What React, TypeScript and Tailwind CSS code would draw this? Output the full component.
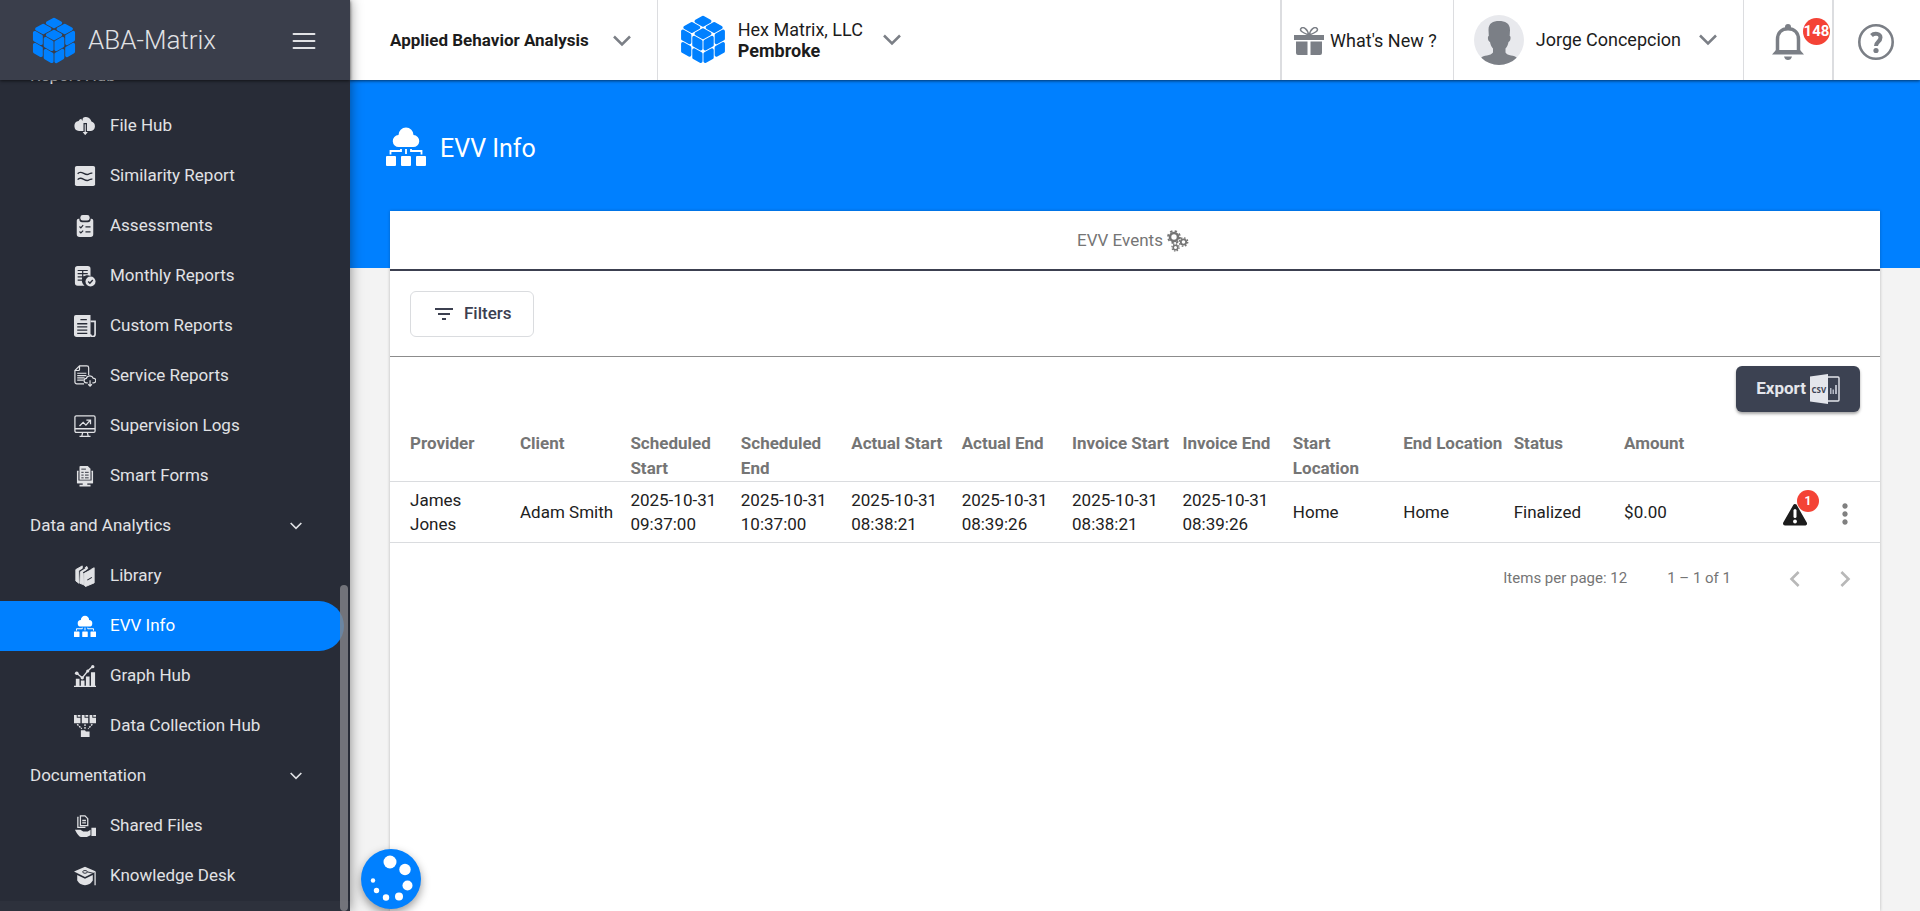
import React, { useState } from "react";
import { FiMenu } from "react-icons/fi";
import { MdChevronLeft, MdChevronRight, MdFilterList, MdMoreVert } from "react-icons/md";

interface IconProps {
  className?: string;
}

interface NavItem {
  label: string;
  icon: (props: IconProps) => React.ReactElement;
}

interface NavSection {
  title: string;
  items: NavItem[];
}

interface EvvEvent {
  provider: string;
  client: string;
  scheduledStart: string;
  scheduledEnd: string;
  actualStart: string;
  actualEnd: string;
  invoiceStart: string;
  invoiceEnd: string;
  startLocation: string;
  endLocation: string;
  status: string;
  amount: number;
  alerts: number;
}

// Isometric cube, four tiles on each of the three faces
const CUBE_FACES = [
  { o: [22, 0], u: [21.5, 12], v: [-21.5, 12] },
  { o: [0.5, 12], u: [21.5, 12], v: [0, 24] },
  { o: [22, 24], u: [21.5, -12], v: [0, 24] },
];

function CubeLogo({ className }: IconProps) {
  const tiles: string[] = [];
  CUBE_FACES.forEach(({ o, u, v }) => {
    [0, 0.5].forEach((a) => {
      [0, 0.5].forEach((b) => {
        const lo = 0.1;
        const hi = 0.4;
        const at = (s: number, t: number) =>
          `${o[0] + u[0] * (a + s) + v[0] * (b + t)},${o[1] + u[1] * (a + s) + v[1] * (b + t)}`;
        tiles.push([at(lo, lo), at(hi, lo), at(hi, hi), at(lo, hi)].join(" "));
      });
    });
  });
  return (
    <svg viewBox="0 0 44 48" className={className} fill="#0080ff" stroke="#0080ff" strokeWidth="3.4" strokeLinejoin="round">
      {tiles.map((points) => (
        <polygon key={points} points={points} />
      ))}
    </svg>
  );
}

function CloudDownIcon({ className }: IconProps) {
  return (
    <svg viewBox="0 0 24 24" className={className}>
      <path
        fill="currentColor"
        d="M5.500 17.500A5.500 5.500 0 0 1 5 6.600 4.500 4.500 0 0 1 8 4.200l1 2.300.7-3.200a6 6 0 0 1 9.300 3.900 5.300 5.300 0 0 1-.5 10.300z"
      />
      <path
        fill="currentColor"
        stroke="#282c37"
        strokeWidth="1.300"
        d="M11 9.500h2.500v8.500h3L12.200 23 8 18h3z"
      />
    </svg>
  );
}

function SimilarityIcon({ className }: IconProps) {
  return (
    <svg viewBox="0 0 24 24" className={className}>
      <rect x="1" y="1" width="22" height="22" rx="2" fill="currentColor" />
      <g fill="none" stroke="#282c37" strokeWidth="1.500">
        <path d="M4 9.500c4-5 8 3 12 .5 1.500-.8 2-1.500 4-1" />
        <path d="M4 16c4-5 8 3 12 .5 1.500-.8 2-1.500 4-1" />
      </g>
    </svg>
  );
}

function AssessmentIcon({ className }: IconProps) {
  return (
    <svg viewBox="0 0 24 24" className={className} fill="currentColor">
      <path d="M5 4h1a3 3 0 0 0 3 4h6a3 3 0 0 0 3-4h1a2 2 0 0 1 2 2v15a3 3 0 0 1-3 3H6a3 3 0 0 1-3-3V6a2 2 0 0 1 2-2z" />
      <rect x="7" y="0" width="10" height="6" rx="2.500" />
      <g fill="none" stroke="#282c37" strokeWidth="1.300">
        <path d="m6 12.500 1.500 1.500L10 11M12.500 13H18M6 18l1.500 1.500L10 17M12.500 18.500H18" />
      </g>
    </svg>
  );
}

function MonthlyIcon({ className }: IconProps) {
  return (
    <svg viewBox="0 0 24 24" className={className}>
      <path fill="currentColor" d="M4 1h11a3 3 0 0 1 3 3v8a6 6 0 0 0-6.500 10.500H4a3 3 0 0 1-3-3V4a3 3 0 0 1 3-3z" />
      <path stroke="#282c37" strokeWidth="1.300" d="M4 6h11M4 9.500h11M4 13h8M4 16.500h6M9.500 6v10.500" />
      <circle cx="18" cy="18" r="5.500" fill="currentColor" />
      <path d="m15.500 18 1.800 1.800 3.200-3.500" fill="none" stroke="#282c37" strokeWidth="1.500" />
    </svg>
  );
}

function NewspaperIcon({ className }: IconProps) {
  return (
    <svg viewBox="0 0 24 24" className={className}>
      <path fill="currentColor" d="M2 0h16v24H3a3 3 0 0 1-3-3V2a2 2 0 0 1 2-2z" />
      <path d="M18 7h5v14a2 2 0 0 1-5 0" fill="none" stroke="currentColor" strokeWidth="1.800" />
      <path stroke="#282c37" strokeWidth="1.500" d="M7 5h7M3.500 9.500h11M3.500 13h11M3.500 16.500h11M3.500 20h11" />
    </svg>
  );
}

function ServiceIcon({ className }: IconProps) {
  return (
    <svg viewBox="0 0 24 24" className={className} fill="none" stroke="currentColor" strokeWidth="1.300">
      <path d="M11 20.500H3A2 2 0 0 1 1 18.500V6l5-5h8a2 2 0 0 1 2 2v8M1 6h4a1 1 0 0 0 1-1V1" />
      <path d="M3.500 9h10M3.500 11.500h10M3.500 14h8M3.500 16.500h7" />
      <path d="M15 19.500h-1.500a2.500 2.500 0 0 1 0-5 4 4 0 0 1 7.500 0 2.500 2.500 0 0 1 .5 5H20M17.500 16.500v6M15.500 21l2 2 2-2" />
    </svg>
  );
}

function MonitorIcon({ className }: IconProps) {
  return (
    <svg viewBox="0 0 24 24" className={className} fill="none" stroke="currentColor" strokeWidth="1.400">
      <rect x="1" y="1" width="22" height="18" rx="1.500" />
      <path d="M1 15h22M9.500 19l-1 4M14.500 19l1 4M6 23.200h12" />
      <path d="m6 12 4-4 3 3 4.500-5M13.500 5.500h4.500v4.500" />
    </svg>
  );
}

function SmartFormIcon({ className }: IconProps) {
  return (
    <svg viewBox="0 0 24 24" className={className}>
      <path fill="currentColor" d="M7 1h8l3 3v12H6V2a1 1 0 0 1 1-1z" />
      <path d="M5 7H4v12h16V7h-1" fill="none" stroke="currentColor" strokeWidth="1.600" />
      <path fill="currentColor" d="M3.500 17h17v3h-6v1.500H18V23.500H6v-2h3.500V20h-6z" />
      <path stroke="#282c37" strokeWidth="1" d="M8 4.500h5M8 8h2.500M12 8h4M8 11h2.500M12 11h4M8 14h2.500M12 14h4" />
    </svg>
  );
}

function LibraryIcon({ className }: IconProps) {
  return (
    <svg viewBox="0 0 24 24" className={className}>
      <path
        fill="currentColor"
        d="M2 5 9 1v3L5 7.500 5.500 20 2 17.500zM7 7l7-5.500 1 2.500-5 4.500.5 13L6.500 20zM11 9l11-6v16.500l-9.500 4L11 22z"
        stroke="currentColor"
        strokeWidth="1"
        strokeLinejoin="round"
      />
      <path fill="none" stroke="#282c37" strokeWidth="1.200" d="M14.500 16.500l5-3M5.500 7 12 3M10 8.500 18 4" />
    </svg>
  );
}

function EvvIcon({ className }: IconProps) {
  return (
    <svg viewBox="0 0 40 40" className={className} fill="currentColor">
      <path d="M13 21a6 6 0 0 1-.5-12 7.500 7.500 0 0 1 15 0A6 6 0 0 1 27 21z" />
      <path d="M20 23v5M4.500 28.500V25H15v-2M35.500 28.500V25H25v-2" fill="none" stroke="currentColor" strokeWidth="1.800" />
      <rect x="0" y="30" width="10" height="10" rx="1" />
      <rect x="15" y="30" width="10" height="10" rx="1" />
      <rect x="30" y="30" width="10" height="10" rx="1" />
    </svg>
  );
}

function GraphIcon({ className }: IconProps) {
  return (
    <svg viewBox="0 0 24 24" className={className} fill="currentColor">
      <path d="M0 22.500h24V24H0zM2 15h4v8H2zM7.500 17h4v6h-4zM13 12.500h4V23h-4zM18.500 8H23v15h-4.500z" />
      <path d="m3 9 6 5 6-7.500 5-4.500" fill="none" stroke="currentColor" strokeWidth="1.500" />
      <circle cx="3" cy="9" r="2" />
      <circle cx="9" cy="14" r="1.800" />
      <circle cx="15" cy="6.500" r="1.700" />
      <circle cx="20.500" cy="1.800" r="1.800" />
    </svg>
  );
}

function CollectionIcon({ className }: IconProps) {
  return (
    <svg viewBox="0 0 24 24" className={className} fill="currentColor">
      <path d="M0 0h3v3h4v6H0zM8.500 0h3v3h4v6h-7zM17 0h3v3h4v6h-7zM4 0h3v2H4zM12.500 0h3v2h-3zM21 0h3v2h-3z" />
      <path d="M7.500 16.500H12l1 1.500h4v6H7.500z" />
      <path d="m3.500 10 5 5M12 10v5M20 10l-4.500 5" fill="none" stroke="currentColor" strokeWidth="1.500" strokeDasharray="2 1" />
    </svg>
  );
}

function SharedIcon({ className }: IconProps) {
  return (
    <svg viewBox="0 0 24 24" className={className}>
      <path d="M5 2.500h-.8v11h8.300M7 1h5l3 3v7.500H7zM9 6h4M9 8.500h4" fill="none" stroke="currentColor" strokeWidth="1.400" />
      <path fill="currentColor" d="M1 16h6l3 2h5l3-2v6l-4 2H8q-3 0-7-8zM19 14h5v9h-5z" />
    </svg>
  );
}

function KnowledgeIcon({ className }: IconProps) {
  return (
    <svg viewBox="0 0 24 24" className={className}>
      <path fill="currentColor" d="M12 2 24 7 12 13 0 7zM3.500 11 12 15l8.500-4v6q-3 5-8.500 5t-8.500-5z" />
      <path d="M23 7.500V22" stroke="currentColor" strokeWidth="1.400" />
      <ellipse cx="12" cy="7.500" rx="2.500" ry="1.500" fill="none" stroke="#282c37" />
      <path d="M14.500 7.500 21 9" stroke="#282c37" />
    </svg>
  );
}

function ChevronDown({ className }: IconProps) {
  return (
    <svg viewBox="0 0 18 12" className={className} fill="none" stroke="currentColor" strokeWidth="2.500">
      <path d="m1 1.500 8 8 8-8" />
    </svg>
  );
}

function GiftIcon({ className }: IconProps) {
  return (
    <svg viewBox="0 0 30 28" className={className} fill="currentColor">
      <path d="M0 8h30v5H0zM2 14.500h11.500V28H4a2 2 0 0 1-2-2zM16.500 14.500H28V26a2 2 0 0 1-2 2h-9.500z" />
      <path
        d="M14.500 8C10 6 5 4 7 1.500S14 2 14.500 8zM15.500 8C20 6 25 4 23 1.500S16 2 15.500 8z"
        fill="none"
        stroke="currentColor"
        strokeWidth="1.500"
      />
    </svg>
  );
}

function AvatarIcon({ className }: IconProps) {
  return (
    <svg viewBox="0 0 50 50" className={className}>
      <clipPath id="avatar-clip">
        <circle cx="25" cy="25" r="25" />
      </clipPath>
      <g clipPath="url(#avatar-clip)">
        <rect width="50" height="50" fill="#e8e9ed" />
        <path
          fill="#7b7f86"
          d="M14.500 15C14.500 8 19 6 25 6s11 2 11 9l-.3 6c1.500 0 1 5.500-1.200 6-.5 3-1.500 5-3 6.500v4C33 41 41 40 43 43v7H7v-7c2-3 10-2 12-5.500v-4c-1.500-1.500-2.500-3.500-3-6.500-2.200-.5-2.700-6-1.200-6z"
        />
      </g>
    </svg>
  );
}

function BellIcon({ className }: IconProps) {
  return (
    <svg viewBox="0 0 32 36" className={className}>
      <path d="M5.500 28V15.500C5.500 9 9.500 4.800 16 4.800S26.500 9 26.500 15.500V28" fill="none" stroke="currentColor" strokeWidth="3.500" />
      <path fill="currentColor" d="M13 5V3a3 3 0 0 1 6 0v2zM4 26h24l4 4.500H0zM12 32.500h8q-1 3.500-4 3.500t-4-3.500z" />
    </svg>
  );
}

function HelpIcon({ className }: IconProps) {
  return (
    <svg viewBox="0 0 36 36" className={className} fill="none" stroke="currentColor">
      <circle cx="18" cy="18" r="16.700" strokeWidth="2.600" />
      <path d="M13.500 11.500c3-3 9-2 9 2 0 4.500-4.500 4-4.500 8.500" strokeWidth="4" />
      <circle cx="18" cy="26.500" r="2.600" fill="currentColor" stroke="none" />
    </svg>
  );
}

function GearsIcon({ className }: IconProps) {
  return (
    <svg viewBox="0 0 22 22" className={className} fill="none" stroke="currentColor">
      <circle cx="7" cy="7" r="4" strokeWidth="2.600" />
      <circle cx="7" cy="7" r="6" strokeWidth="1.800" strokeDasharray="2.360 2.352" />
      <circle cx="16.500" cy="12" r="2.700" strokeWidth="1.800" />
      <circle cx="16.500" cy="12" r="4.200" strokeWidth="1.400" strokeDasharray="1.650 1.649" />
      <circle cx="8.500" cy="17.500" r="2.300" strokeWidth="1.600" />
      <circle cx="8.500" cy="17.500" r="3.600" strokeWidth="1.200" strokeDasharray="1.410 1.417" />
    </svg>
  );
}

function CsvIcon({ className }: IconProps) {
  return (
    <svg viewBox="0 0 30 30" className={className}>
      <path d="M18 3h10a1 1 0 0 1 1 1v22a1 1 0 0 1-1 1H18" fill="none" stroke="#e4e6ec" strokeWidth="1.400" />
      <path fill="#e4e6ec" d="M0 2.500 18 0v30L0 27.500z" />
      <path fill="#b4b8c4" d="M20 14h1.500v6H20zM22.500 15.500H24V20h-1.500zM25 11h2v9h-2z" />
      <text x="1.500" y="18.500" fontSize="8" fontWeight="700" fontFamily="Open Sans, sans-serif" fill="#3c4252">
        CSV
      </text>
    </svg>
  );
}

function WarningIcon({ className }: IconProps) {
  return (
    <svg viewBox="0 0 24 24" className={className}>
      <path fill="#1c1c1c" stroke="#1c1c1c" strokeWidth="4" strokeLinejoin="round" d="M12 4 22 21.500H2z" />
      <path stroke="#fff" strokeWidth="3" strokeLinecap="round" d="M12 8.500v6" />
      <circle cx="12" cy="19.500" r="1.900" fill="#fff" />
    </svg>
  );
}

function PaletteIcon({ className }: IconProps) {
  return (
    <svg viewBox="0 0 60 60" className={className} fill="#fff">
      <circle cx="29" cy="13" r="6.500" />
      <circle cx="44" cy="20.500" r="5.700" />
      <circle cx="46.500" cy="36.500" r="5" />
      <circle cx="38" cy="47.500" r="4" />
      <circle cx="25" cy="48.500" r="3.200" />
      <circle cx="15.500" cy="41.500" r="2.700" />
      <circle cx="12" cy="31.500" r="2.200" />
    </svg>
  );
}

const sections: NavSection[] = [
  {
    title: "Report Hub",
    items: [
      { label: "File Hub", icon: CloudDownIcon },
      { label: "Similarity Report", icon: SimilarityIcon },
      { label: "Assessments", icon: AssessmentIcon },
      { label: "Monthly Reports", icon: MonthlyIcon },
      { label: "Custom Reports", icon: NewspaperIcon },
      { label: "Service Reports", icon: ServiceIcon },
      { label: "Supervision Logs", icon: MonitorIcon },
      { label: "Smart Forms", icon: SmartFormIcon },
    ],
  },
  {
    title: "Data and Analytics",
    items: [
      { label: "Library", icon: LibraryIcon },
      { label: "EVV Info", icon: EvvIcon },
      { label: "Graph Hub", icon: GraphIcon },
      { label: "Data Collection Hub", icon: CollectionIcon },
    ],
  },
  {
    title: "Documentation",
    items: [
      { label: "Shared Files", icon: SharedIcon },
      { label: "Knowledge Desk", icon: KnowledgeIcon },
    ],
  },
];

const columns = [
  "Provider",
  "Client",
  "Scheduled Start",
  "Scheduled End",
  "Actual Start",
  "Actual End",
  "Invoice Start",
  "Invoice End",
  "Start Location",
  "End Location",
  "Status",
  "Amount",
];

const events: EvvEvent[] = [
  {
    provider: "James Jones",
    client: "Adam Smith",
    scheduledStart: "2025-10-31 09:37:00",
    scheduledEnd: "2025-10-31 10:37:00",
    actualStart: "2025-10-31 08:38:21",
    actualEnd: "2025-10-31 08:39:26",
    invoiceStart: "2025-10-31 08:38:21",
    invoiceEnd: "2025-10-31 08:39:26",
    startLocation: "Home",
    endLocation: "Home",
    status: "Finalized",
    amount: 0,
    alerts: 1,
  },
];

function Sidebar() {
  const [active, setActive] = useState("EVV Info");

  return (
    <aside className="relative z-30 flex h-full w-[350px] shrink-0 flex-col bg-[#282c37] text-[#e1e2e5] shadow-[0_0_12px_rgba(0,0,0,0.45)]">
      <div className="z-10 flex h-20 shrink-0 items-center bg-[#3a3e4b] px-8 pt-px shadow-[0_1px_3px_rgba(0,0,0,0.6)]">
        <CubeLogo className="h-12 w-11" />
        <span className="ml-3 text-[26px] font-light">ABA-Matrix</span>
        <button aria-label="Toggle menu" className="ml-auto">
          <FiMenu className="size-7" strokeWidth={1.6} />
        </button>
      </div>
      <nav className="flex min-h-0 flex-1 flex-col justify-end overflow-hidden text-[17px]">
        {sections.map((section) => (
          <div key={section.title} className="shrink-0">
            <button className="flex h-[50px] w-full items-center justify-between pl-[30px] pr-12">
              {section.title}
              <ChevronDown className="w-3" />
            </button>
            {section.items.map(({ label, icon: Icon }) => (
              <a
                key={label}
                href="#"
                onClick={() => setActive(label)}
                className={`mr-1.5 flex h-[50px] items-center gap-3.5 rounded-r-full pl-[74px] ${
                  active === label ? "bg-[#0080ff] text-white" : ""
                }`}
              >
                <Icon className="size-[22px]" />
                {label}
              </a>
            ))}
          </div>
        ))}
        <div className="h-2.5 shrink-0 bg-[#2d313c]" />
      </nav>
      <div className="absolute bottom-0 right-0.5 h-[326px] w-2 rounded-full bg-[#84868b]/80" />
    </aside>
  );
}

function TopBar() {
  return (
    <header className="relative z-20 flex h-20 shrink-0 items-stretch bg-white text-[17px] text-[#1c1c1c] shadow-[0_1px_3px_rgba(0,0,0,0.6)]">
      <button className="flex items-center gap-6 border-r border-[#dcdde0] pl-10 pr-[26px] pt-0.5 font-bold">
        Applied Behavior Analysis
        <ChevronDown className="w-[18px] text-[#7b7f86]" />
      </button>
      <button className="flex items-center pl-[22px] text-left text-lg">
        <CubeLogo className="h-[50px] w-[46px]" />
        <span className="ml-3 mr-5 leading-[21px]">
          Hex Matrix, LLC
          <span className="block font-bold">Pembroke</span>
        </span>
        <ChevronDown className="w-[18px] text-[#7b7f86]" />
      </button>
      <div className="ml-auto flex items-stretch text-lg">
        <button className="flex items-center gap-1.5 border-l-2 border-[#dcdde0] pl-3 pr-4 pt-0.5">
          <GiftIcon className="h-7 w-[30px] text-[#7b7f86]" />
          What's New ?
        </button>
        <button className="flex items-center border-l border-[#dcdde0] pl-5 pr-[26px]">
          <AvatarIcon className="mr-3 size-[50px]" />
          Jorge Concepcion
          <ChevronDown className="ml-[18px] w-[18px] text-[#7b7f86]" />
        </button>
        <button
          aria-label="Notifications"
          className="relative flex w-[89px] items-center border-l border-[#dcdde0] pl-7 pt-1"
        >
          <BellIcon className="h-9 w-8 text-[#7b7f86]" />
          <span className="absolute right-0.5 top-[18px] flex size-[27px] items-center justify-center rounded-full bg-[#f44336] text-[15px] font-bold text-white">
            148
          </span>
        </button>
        <button
          aria-label="Help"
          className="flex w-[88px] items-center justify-center border-l-2 border-[#dcdde0] pr-0.5 pt-1"
        >
          <HelpIcon className="size-9 text-[#7b7f86]" />
        </button>
      </div>
    </header>
  );
}

function EventsTable() {
  return (
    <table className="w-full table-fixed text-left text-[17px]">
      <colgroup>
        <col className="w-[130px]" />
        {columns.slice(1).map((column) => (
          <col key={column} />
        ))}
        <col />
        <col className="w-[35px]" />
      </colgroup>
      <thead>
        <tr className="h-[50px] border-b border-[#dadcdf] align-top leading-[25px] text-[#757575]">
          {columns.map((column) => (
            <th key={column} className="pr-1 font-bold first:pl-5">
              {column}
            </th>
          ))}
          <th colSpan={2} aria-label="Actions" />
        </tr>
      </thead>
      <tbody>
        {events.map((event) => (
          <tr key={event.provider} className="h-[61px] border-b border-[#dadcdf] leading-6 text-[#212121]">
            <td className="pl-5 pr-10">{event.provider}</td>
            <td>{event.client}</td>
            <td>{event.scheduledStart}</td>
            <td>{event.scheduledEnd}</td>
            <td>{event.actualStart}</td>
            <td>{event.actualEnd}</td>
            <td>{event.invoiceStart}</td>
            <td>{event.invoiceEnd}</td>
            <td>{event.startLocation}</td>
            <td>{event.endLocation}</td>
            <td>{event.status}</td>
            <td>${event.amount.toFixed(2)}</td>
            <td colSpan={2}>
              <div className="flex items-center justify-end pr-[19px] pt-1">
                <button aria-label="Alerts" className="relative mr-[22px]">
                  <WarningIcon className="size-6" />
                  <span className="absolute -right-3 -top-3 flex size-[22px] items-center justify-center rounded-full bg-[#f44336] text-xs font-bold text-white">
                    {event.alerts}
                  </span>
                </button>
                <button aria-label="More">
                  <MdMoreVert className="size-8 text-[#808080]" />
                </button>
              </div>
            </td>
          </tr>
        ))}
      </tbody>
    </table>
  );
}

export default function App() {
  return (
    <div className="flex h-screen overflow-hidden bg-[#f3f3f3] font-['Roboto',sans-serif]">
      <Sidebar />
      <div className="flex min-w-0 flex-1 flex-col">
        <TopBar />
        <main className="relative flex flex-1 flex-col px-10">
          <div className="absolute inset-x-0 top-0 h-[188px] bg-[#0080ff]" />
          <div className="relative -ml-1 flex h-[131px] items-center gap-3.5 text-white">
            <EvvIcon className="size-10" />
            <h1 className="pt-1.5 text-[25px]">EVV Info</h1>
          </div>
          <section className="relative flex-1 bg-white shadow-[0_0_3px_rgba(0,0,0,0.25)]">
            <button className="flex h-[60px] w-full items-center justify-center gap-1 border-b-2 border-[#3c4050] pr-1 pt-0.5 text-[17px] text-[#757575]">
              EVV Events
              <GearsIcon className="size-[22px]" />
            </button>
            <div className="flex h-[86px] items-center border-b border-[#8c8c8c] px-5">
              <button className="flex h-[46px] items-center gap-2 rounded-md border border-[#dadcdf] px-[21px] text-[17px] font-medium text-[#3c4050]">
                <MdFilterList className="size-6" />
                Filters
              </button>
            </div>
            <div className="flex justify-end px-5 pb-[19px] pt-[9px]">
              <button className="flex h-[46px] items-center gap-1 rounded-md bg-[#3c4252] px-5 text-[17px] font-bold text-[#e4e6ec] shadow-[0_2px_3px_rgba(0,0,0,0.35)]">
                Export
                <CsvIcon className="size-[30px]" />
              </button>
            </div>
            <EventsTable />
            <div className="flex h-[71px] items-center justify-end pr-[19px] text-[15px] text-[#757575]">
              <span>Items per page: 12</span>
              <span className="ml-10 mr-12">1 – 1 of 1</span>
              <button aria-label="Previous page" className="mr-[18px]" disabled>
                <MdChevronLeft className="size-8 text-[#b8b8b8]" />
              </button>
              <button aria-label="Next page" disabled>
                <MdChevronRight className="size-8 text-[#b8b8b8]" />
              </button>
            </div>
          </section>
        </main>
      </div>
      <button
        aria-label="Theme options"
        className="fixed bottom-0.5 left-[361px] z-40 size-[60px] rounded-full bg-[#0080ff] shadow-[0_4px_10px_rgba(0,0,0,0.4)]"
      >
        <PaletteIcon className="size-full" />
      </button>
    </div>
  );
}
